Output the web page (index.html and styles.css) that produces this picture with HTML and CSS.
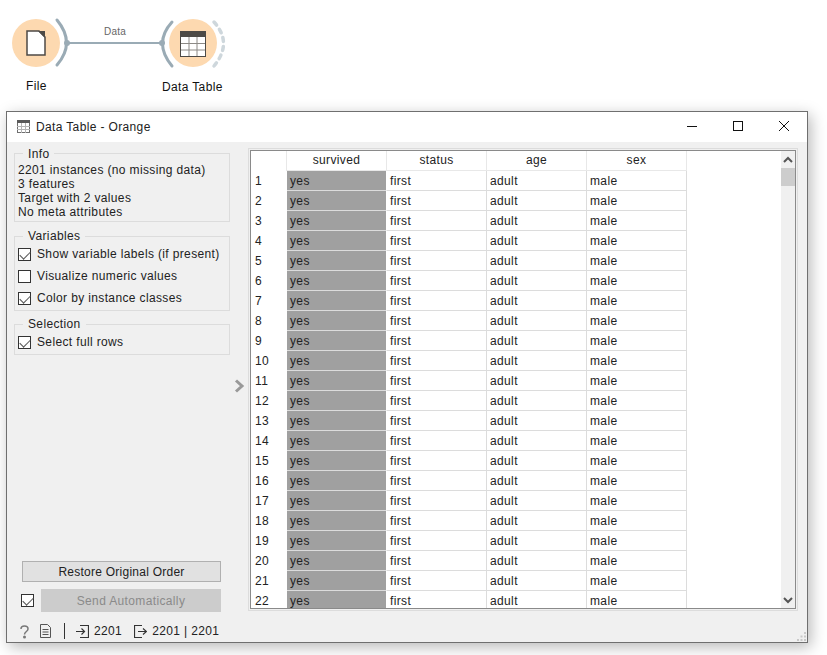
FILE: index.html
```html
<!DOCTYPE html>
<html lang="en">
<head>
<meta charset="utf-8">
<title>Data Table - Orange</title>
<link rel="stylesheet" href="styles.css">
</head>
<body>
<div class="canvas">
  <svg class="links" width="240" height="100" viewBox="0 0 240 100">
    <circle cx="36" cy="43" r="24" fill="#fdd9b0"/>
    <circle cx="193" cy="43" r="24" fill="#fdd9b0"/>
    <path d="M57 20 Q76 43 57 65" fill="none" stroke="#9aabb5" stroke-width="3" stroke-linecap="round"/>
    <path d="M172 22 Q153 43 172 66" fill="none" stroke="#9aabb5" stroke-width="3" stroke-linecap="round"/>
    <path d="M214 22 Q233 43 214 66" fill="none" stroke="#ced7dc" stroke-width="3.500" stroke-dasharray="4 5" stroke-linecap="round"/>
    <line x1="67" y1="43" x2="162" y2="43" stroke="#9aabb5" stroke-width="2"/>
    <circle cx="67" cy="43" r="3" fill="#9aabb5"/>
    <circle cx="162" cy="43" r="3" fill="#9aabb5"/>
    <path d="M27 31 H39 L45 37 V55 H27 Z" fill="#fff" stroke="#4d4a46" stroke-width="1.500"/>
    <path d="M38 31 L45 38 V31 Z" fill="#4d4a46"/>
    <rect x="180.500" y="31.500" width="25" height="25" fill="#fff" stroke="#4d4a46"/>
    <rect x="180" y="31" width="26" height="6" fill="#4d4a46"/>
    <path d="M189 37 V56 M197 37 V56 M181 43.500 H205 M181 50 H205" stroke="#8d8a86" fill="none"/>
  </svg>
  <span class="link-label">Data</span>
  <span class="node-label node-file">File</span>
  <span class="node-label node-table">Data Table</span>
</div>

<div class="window">
  <header class="titlebar">
    <svg class="title-icon" width="13" height="13" viewBox="0 0 13 13"><rect x=".5" y=".5" width="12" height="12" fill="#fff" stroke="#6f6f6f"/><rect x="0" y="0" width="13" height="3" fill="#5a5a5a"/><path d="M4.500 3V13M8.500 3V13M0 6.500H13M0 9.500H13" stroke="#b5b5b5"/></svg>
    <span class="title-text">Data Table - Orange</span>
    <div class="win-buttons">
      <svg width="12" height="12" viewBox="0 0 12 12"><path d="M1 6.500H11" stroke="#111"/></svg>
      <svg width="12" height="12" viewBox="0 0 12 12"><rect x="1.500" y="1.500" width="9" height="9" fill="none" stroke="#111"/></svg>
      <svg width="12" height="12" viewBox="0 0 12 12"><path d="M1 1L11 11M11 1L1 11" stroke="#111"/></svg>
    </div>
  </header>

  <div class="content">
    <aside class="sidebar">
      <section class="box box-info">
        <h3 class="box-title">Info</h3>
        <p>2201 instances (no missing data)</p>
        <p>3 features</p>
        <p>Target with 2 values</p>
        <p>No meta attributes</p>
      </section>
      <section class="box box-vars">
        <h3 class="box-title">Variables</h3>
        <label class="check on"><i></i>Show variable labels (if present)</label>
        <label class="check"><i></i>Visualize numeric values</label>
        <label class="check on"><i></i>Color by instance classes</label>
      </section>
      <section class="box box-sel">
        <h3 class="box-title">Selection</h3>
        <label class="check on"><i></i>Select full rows</label>
      </section>
      <div class="spring"></div>
      <button class="btn restore">Restore Original Order</button>
      <div class="send-row">
        <label class="check on"><i></i></label>
        <button class="btn send">Send Automatically</button>
      </div>
    </aside>

    <div class="splitter">
      <svg width="11" height="14" viewBox="0 0 11 14"><path d="M2 1.500L8 7L2 12.500" fill="none" stroke="#999" stroke-width="3"/></svg>
    </div>

    <div class="table-frame">
      <div class="table">
        <div class="row head"><span class="idx"></span><span>survived</span><span>status</span><span>age</span><span>sex</span></div>
        <div class="row"><span class="idx">1</span><span class="cls">yes</span><span>first</span><span>adult</span><span>male</span></div>
        <div class="row"><span class="idx">2</span><span class="cls">yes</span><span>first</span><span>adult</span><span>male</span></div>
        <div class="row"><span class="idx">3</span><span class="cls">yes</span><span>first</span><span>adult</span><span>male</span></div>
        <div class="row"><span class="idx">4</span><span class="cls">yes</span><span>first</span><span>adult</span><span>male</span></div>
        <div class="row"><span class="idx">5</span><span class="cls">yes</span><span>first</span><span>adult</span><span>male</span></div>
        <div class="row"><span class="idx">6</span><span class="cls">yes</span><span>first</span><span>adult</span><span>male</span></div>
        <div class="row"><span class="idx">7</span><span class="cls">yes</span><span>first</span><span>adult</span><span>male</span></div>
        <div class="row"><span class="idx">8</span><span class="cls">yes</span><span>first</span><span>adult</span><span>male</span></div>
        <div class="row"><span class="idx">9</span><span class="cls">yes</span><span>first</span><span>adult</span><span>male</span></div>
        <div class="row"><span class="idx">10</span><span class="cls">yes</span><span>first</span><span>adult</span><span>male</span></div>
        <div class="row"><span class="idx">11</span><span class="cls">yes</span><span>first</span><span>adult</span><span>male</span></div>
        <div class="row"><span class="idx">12</span><span class="cls">yes</span><span>first</span><span>adult</span><span>male</span></div>
        <div class="row"><span class="idx">13</span><span class="cls">yes</span><span>first</span><span>adult</span><span>male</span></div>
        <div class="row"><span class="idx">14</span><span class="cls">yes</span><span>first</span><span>adult</span><span>male</span></div>
        <div class="row"><span class="idx">15</span><span class="cls">yes</span><span>first</span><span>adult</span><span>male</span></div>
        <div class="row"><span class="idx">16</span><span class="cls">yes</span><span>first</span><span>adult</span><span>male</span></div>
        <div class="row"><span class="idx">17</span><span class="cls">yes</span><span>first</span><span>adult</span><span>male</span></div>
        <div class="row"><span class="idx">18</span><span class="cls">yes</span><span>first</span><span>adult</span><span>male</span></div>
        <div class="row"><span class="idx">19</span><span class="cls">yes</span><span>first</span><span>adult</span><span>male</span></div>
        <div class="row"><span class="idx">20</span><span class="cls">yes</span><span>first</span><span>adult</span><span>male</span></div>
        <div class="row"><span class="idx">21</span><span class="cls">yes</span><span>first</span><span>adult</span><span>male</span></div>
        <div class="row"><span class="idx">22</span><span class="cls">yes</span><span>first</span><span>adult</span><span>male</span></div>
      </div>
      <div class="scrollbar">
        <svg width="14" height="17" viewBox="0 0 14 17"><path d="M3 11L7 7L11 11" fill="none" stroke="#555" stroke-width="2"/></svg>
        <div class="thumb"></div>
        <div class="track"></div>
        <svg width="14" height="16" viewBox="0 0 14 16"><path d="M3 6L7 10L11 6" fill="none" stroke="#555" stroke-width="2"/></svg>
      </div>
    </div>
  </div>

  <footer class="statusbar">
    <svg class="st-icon" width="9" height="15" viewBox="0 0 9 15"><path d="M1 5C1 1 8 1 8 5C8 7.500 4.500 7.500 4.500 10.500" fill="none" stroke="#777" stroke-width="1.500"/><circle cx="4.500" cy="13" r="1.500" fill="#777"/></svg>
    <svg class="st-icon doc" width="11" height="14" viewBox="0 0 11 14"><path d="M.5 .5H7.500L10.500 3.500V13.500H.5Z M2.500 5.500H8.500M2.500 8H8.500M2.500 10.500H8.500" fill="none" stroke="#555"/></svg>
    <span class="st-sep"></span>
    <svg class="st-icon" width="13" height="13" viewBox="0 0 13 13"><path d="M4 .5H12.500V12.500H4M0 6.500H8M5.500 3.500L8.500 6.500L5.500 9.500" fill="none" stroke="#333" stroke-width="1.200"/></svg>
    <span class="st-num">2201</span>
    <svg class="st-icon out" width="13" height="13" viewBox="0 0 13 13"><path d="M8 .5H.5V12.500H8M4 6.500H12M9 3.500L12.500 6.500L9 9.500" fill="none" stroke="#333" stroke-width="1.200"/></svg>
    <span class="st-num">2201 | 2201</span>
    <svg class="grip" width="11" height="11" viewBox="0 0 11 11"><path d="M8 1h2v2H8zM4.500 4.500h2v2h-2zM8 4.500h2v2H8zM1 8h2v2H1zM4.500 8h2v2h-2zM8 8h2v2H8z" fill="#c8c8c8"/></svg>
  </footer>
</div>
</body>
</html>
```
FILE: styles.css
```css
* { box-sizing: border-box; }
html, body { margin: 0; padding: 0; background: #fff; height: 655px; overflow: hidden; }
body { font-family: "Liberation Sans", "Noto Sans", sans-serif; font-size: 12px; letter-spacing: .36px; color: #222; }

.canvas { position: relative; height: 111px; }
.links { position: absolute; left: 0; top: 0; }
.link-label { position: absolute; left: 104px; top: 25px; font-size: 10px; line-height: 14px; letter-spacing: .2px; color: #666; }
.node-label { position: absolute; font-size: 12px; line-height: 16px; color: #111; }
.node-file { left: 26px; top: 78px; }
.node-table { left: 162px; top: 79px; }

.window {
  margin-left: 6px; width: 802px; height: 532px;
  background: #f0f0f0; border: 1px solid #6f6f6f;
  box-shadow: 3px 4px 14px rgba(0,0,0,.28);
  display: flex; flex-direction: column;
}
.titlebar { height: 30px; flex: none; background: #fff; display: flex; align-items: center; padding: 0 0 2px 10px; }
.title-icon { margin-right: 6px; }
.title-text { font-size: 12px; color: #222; margin-top: 2px; }
.win-buttons { margin-left: auto; display: flex; gap: 34px; padding-right: 17px; }

.content { flex: 1; display: flex; min-height: 0; padding: 10px 11px 0 7px; }
.sidebar { width: 216px; flex: none; display: flex; flex-direction: column; padding-bottom: 8px; }
.box { position: relative; border: 1px solid #dcdcdc; padding: 9px 3px 0; }
.box-title {
  position: absolute; left: 8px; top: -8px; margin: 0; padding: 0 5px;
  background: #f0f0f0; font-size: 12px; font-weight: 400; line-height: 16px; color: #222;
}
.box p { margin: 0; line-height: 14px; }
.box-info { height: 69px; margin-top: 1px; }
.box-vars { height: 75px; margin-top: 14px; padding-top: 6px; }
.box-vars .box-title, .box-sel .box-title { top: -9px; }
.box-sel { height: 31px; margin-top: 13px; padding-top: 7px; }
.check { display: flex; align-items: center; height: 22px; }
.box-sel .check { height: 20px; }
.check i {
  width: 13px; height: 13px; margin-right: 6px; flex: none;
  background: #fff; border: 1px solid #333; display: block; position: relative;
}
.check.on i::after {
  content: ""; position: absolute; left: 3px; top: 0; width: 5px; height: 9px;
  border: solid #555; border-width: 0 1.5px 1.5px 0; transform: rotate(45deg);
}
.spring { flex: 1; }
.btn {
  font: inherit; letter-spacing: inherit; height: 21px; border: 1px solid #b0b0b0; background: #e1e1e1; color: #222; padding: 0;
}
.restore { width: 199px; margin-left: 8px; letter-spacing: .25px; }
.send-row { display: flex; align-items: center; margin: 7px 0 0 7px; }
.send-row .check i { margin-right: 7px; }
.send { width: 180px; height: 23px; background: #cccccc; border-color: #cccccc; color: #8a8a8a; }

.splitter { width: 20px; flex: none; display: flex; align-items: center; justify-content: center; padding: 0 2px 0 0; }
.splitter svg { display: block; }

.table-frame {
  width: 546px; height: 459px; flex: none; margin-top: -2px; background: #fff;
  border: 1px solid #8a8a8a; outline: 1px solid #dcdcdc; outline-offset: 1px; display: flex;
}
.table { flex: 1; overflow: hidden; min-width: 0; }
.row { display: flex; height: 20px; }
.row > span {
  width: 100px; flex: none; line-height: 21px; padding-left: 3px;
  border-right: 1px solid #dcdcdc; border-bottom: 1px solid #dcdcdc; color: #222;
}
.row > .idx { width: 36px; padding-left: 4px; border: 0; }
.row > .cls { background: #a0a0a0; border-bottom-color: #dcdcdc; border-right-color: #fff; }
.head > span { text-align: center; padding-left: 0; line-height: 18px; border-color: #e8e8e8; }
.head > .idx { border-right: 1px solid #e8e8e8; border-bottom: 0; }
.scrollbar { width: 14px; flex: none; background: #f0f0f0; display: flex; flex-direction: column; }
.scrollbar svg { display: block; flex: none; }
.thumb { height: 18px; background: #cdcdcd; flex: none; }
.track { flex: 1; }

.statusbar { height: 22px; flex: none; display: flex; align-items: center; padding-left: 13px; position: relative; }
.st-icon { display: block; flex: none; }
.st-icon.doc { margin-left: 11px; }
.st-sep { width: 1px; height: 16px; background: #333; margin: 0 11px 0 13px; }
.st-num { margin-left: 5px; }
.st-icon.out { margin-left: 12px; }
.grip { position: absolute; right: 0; bottom: 0; }
```
